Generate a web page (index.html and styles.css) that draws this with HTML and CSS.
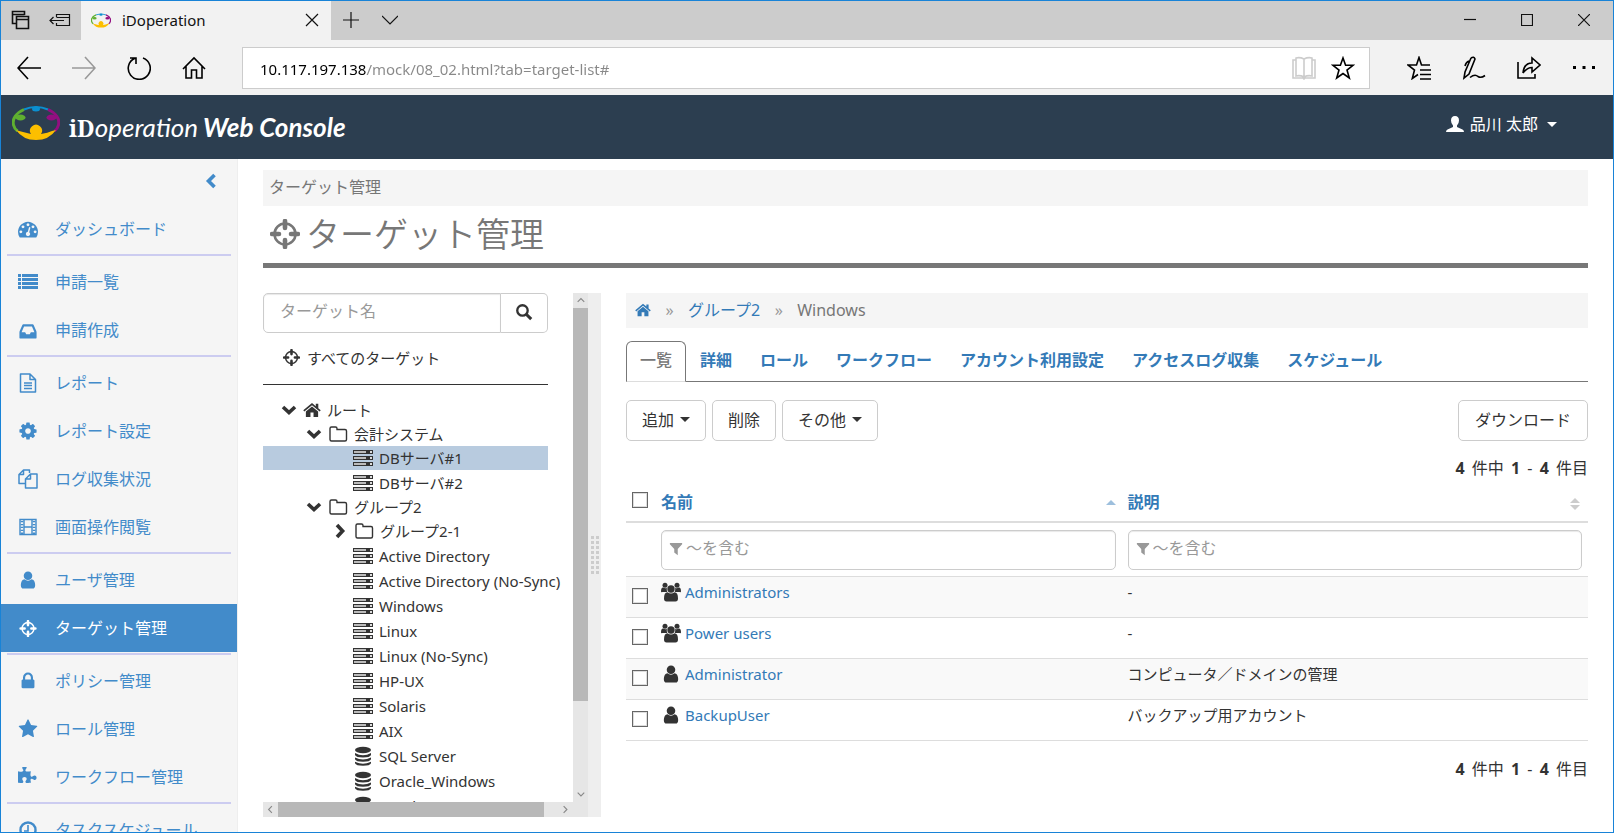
FILE: index.html
```html
<!DOCTYPE html>
<html lang="ja">
<head>
<meta charset="utf-8">
<title>iDoperation</title>
<link rel="stylesheet" href="styles.css">
</head>
<body>
<svg class="sprite" aria-hidden="true">
  <symbol id="logo" viewBox="0 0 48 34">
    <path d="M12 3.500Q24-1.500 36 3.500" fill="none" stroke="#0b8fd0" stroke-width="2"/>
    <ellipse cx="24" cy="3" rx="4" ry="2.500" fill="#0b8fd0"/>
    <path d="M12 3.500C4 7 0 13 1.500 19q1 4 4 6" fill="none" stroke="#5fb030" stroke-width="3"/>
    <ellipse cx="8.500" cy="11.500" rx="5" ry="3" fill="#5fb030"/>
    <path d="M36 3.500C44 7 48 13 46.500 19q-1 4-4 6" fill="none" stroke="#930f80" stroke-width="3"/>
    <ellipse cx="39.500" cy="11.500" rx="5" ry="3" fill="#930f80"/>
    <path d="M4 24q3 1 7 2 4 1 8 2a6 6 0 1 1 10 0q7-1 11-3l4-1q-7 10-20 10T4 24z" fill="#fcbf00"/>
  </symbol>
  <symbol id="dash" viewBox="0 0 1792 1792"><path d="M384 1152q0-53-37.500-90.500t-90.500-37.500-90.500 37.500-37.500 90.500 37.500 90.500 90.500 37.500 90.500-37.500 37.500-90.500zm192-448q0-53-37.500-90.500t-90.500-37.500-90.500 37.500-37.500 90.500 37.500 90.500 90.500 37.500 90.500-37.500 37.500-90.500zm428 481l101-382q6-26-7.500-48.500t-38.500-29.500-48 6.500-30 39.500l-101 382q-60 5-107 43.500t-63 98.500q-20 77 20 146t117 89 146-20 89-117q16-60-6-117t-72-91zm660-33q0-53-37.500-90.500t-90.500-37.500-90.500 37.500-37.500 90.500 37.500 90.500 90.500 37.500 90.500-37.500 37.500-90.500zm-640-640q0-53-37.500-90.500t-90.500-37.500-90.500 37.500-37.500 90.500 37.500 90.500 90.500 37.500 90.500-37.500 37.500-90.500zm448 192q0-53-37.500-90.500t-90.500-37.500-90.500 37.500-37.500 90.500 37.500 90.500 90.500 37.500 90.500-37.500 37.500-90.500zm320 448q0 261-141 483-19 29-54 29h-1402q-35 0-54-29-141-221-141-483 0-182 71-348t191-286 286-191 348-71 348 71 286 191 191 286 71 348z"/></symbol>
  <symbol id="list" viewBox="0 0 20 20"><path d="M0 2h3v3H0zM4 2h16v3H4zM0 6h3v3H0zM4 6h16v3H4zM0 10h3v3H0zM4 10h16v3H4zM0 14h3v3H0zM4 14h16v3H4z"/></symbol>
  <symbol id="inbox" viewBox="0 0 1536 1792"><path d="M1023 1088h316l-5-16-212-496h-708l-212 496-5 16h316l95 192h320zm513 30v482q0 26-19 45t-45 19H64q-26 0-45-19t-19-45v-482q0-62 25-123l238-552q10-25 36.500-42t52.500-17h832q26 0 52.500 17t36.500 42l238 552q25 61 25 123z"/></symbol>
  <symbol id="file" viewBox="0 0 20 20"><path d="M2.500 1H12l5.500 5.500V19h-15zM12 1v5.500h5.500M6 10h8M6 12.500h8M6 15.500h8" fill="none" stroke="currentColor" stroke-width="1.500" stroke-linejoin="round"/></symbol>
  <symbol id="cog" viewBox="0 0 1792 1792"><path d="M1152 896q0-106-75-181t-181-75-181 75-75 181 75 181 181 75 181-75 75-181zm512-109v222q0 12-8 23t-20 13l-185 28q-19 54-39 91 35 50 107 138 10 12 10 25t-9 23q-27 37-99 108t-94 71q-12 0-26-9l-138-108q-44 23-91 38-16 136-29 186-7 28-36 28h-222q-14 0-24.500-8.500t-11.500-21.500l-28-184q-49-16-90-37l-141 107q-10 9-25 9-14 0-25-11-126-114-165-168-7-10-7-23 0-12 8-23 15-21 51-66.500t54-70.500q-27-50-41-99l-183-27q-13-2-21-12.500t-8-23.500v-222q0-12 8-23t19-13l186-28q14-46 39-92-40-57-107-138-10-12-10-24 0-10 9-23 26-36 98.500-107.500t94.500-71.500q13 0 26 10l138 107q44-23 91-38 16-136 29-186 7-28 36-28h222q14 0 24.500 8.500t11.500 21.500l28 184q49 16 90 37l142-107q9-9 24-9 13 0 25 10 129 119 165 170 7 8 7 22 0 12-8 23-15 21-51 66.500t-54 70.500q26 50 41 98l183 28q13 2 21 12.500t8 23.500z"/></symbol>
  <symbol id="copy" viewBox="0 0 20 20"><path d="M11.500 4V1H5.500L1 5.500V14.500h6M5.500 1v4.500H1M12.500 5H19v14H7.500V10zM12.500 5v5h-5" fill="none" stroke="currentColor" stroke-width="1.500" stroke-linejoin="round"/></symbol>
  <symbol id="film" viewBox="0 0 20 20"><path d="M2 2.500h16v15H2zM6 2.500v15M14 2.500v15M6 10h8" fill="none" stroke="currentColor" stroke-width="1.400"/><path d="M4 4v13M16 4v13" fill="none" stroke="currentColor" stroke-width="2.600" stroke-dasharray="1.300 1.600"/></symbol>
  <symbol id="user" viewBox="0 0 1792 1792"><path d="M1536 1399q0 109-62.500 187t-150.500 78h-854q-88 0-150.500-78t-62.500-187q0-85 8.500-160.500t31.500-152 58.500-131 94-89 134.500-34.500q131 128 313 128t313-128q76 0 134.500 34.500t94 89 58.500 131 31.500 152 8.500 160.500zm-256-887q0 159-112.500 271.500t-271.500 112.500-271.500-112.500-112.500-271.500 112.500-271.500 271.500-112.500 271.500 112.500 112.500 271.500z"/></symbol>
  <symbol id="cross" viewBox="0 0 30 30"><circle cx="15" cy="15" r="10.500" fill="none" stroke="currentColor" stroke-width="2.600"/><path d="M15 2v7M15 21v7M2 15h7M21 15h7" fill="none" stroke="currentColor" stroke-width="4.600" stroke-linecap="round"/></symbol>
  <symbol id="lock" viewBox="0 0 1792 1792"><path d="M640 768h512v-192q0-106-75-181t-181-75-181 75-75 181v192zm832 96v576q0 40-28 68t-68 28h-960q-40 0-68-28t-28-68v-576q0-40 28-68t68-28h32v-192q0-184 132-316t316-132 316 132 132 316v192h32q40 0 68 28t28 68z"/></symbol>
  <symbol id="star" viewBox="0 0 1792 1792"><path d="M1728 647q0 22-26 48l-363 354 86 500q1 7 1 20 0 21-10.500 35.500t-30.500 14.500q-19 0-40-12l-449-236-449 236q-22 12-40 12-21 0-31.500-14.500t-10.500-35.500q0-6 2-20l86-500-364-354q-25-27-25-48 0-37 56-46l502-73 225-455q19-41 49-41t49 41l225 455 502 73q56 9 56 46z"/></symbol>
  <symbol id="puzzle" viewBox="0 0 1792 1792"><path d="M1664 970q0 81-44.500 135t-123.500 54q-41 0-77.500-17.500t-59-38-56.500-38-71-17.500q-110 0-110 124 0 39 16 115t15 115v5q-22 0-33 1-34 3-97.500 11.500t-115.500 13.500-98 5q-61 0-103-26.500t-42-83.500q0-37 17.500-71t38-56.500 38-59 17.500-77.500q0-79-54-123.500t-135-44.500q-84 0-143 45.500t-59 127.500q0 43 15 83t33.500 64.500 33.500 53 15 50.500q0 45-46 89-37 35-117 35-95 0-245-24-9-2-27.500-4t-27.500-4l-13-2q-1 0-3-1-2 0-2-1v-1024q2 1 17.500 3.500t34 5 21.500 3.500q150 24 245 24 80 0 117-35 46-44 46-89 0-22-15-50.500t-33.500-53-33.500-64.500-15-83q0-82 59-127.500t144-45.500q80 0 134 44.500t54 123.500q0 41-17.500 77.500t-38 59-38 56.500-17.500 71q0 57 42 83.500t103 26.500q64 0 180-15t163-17v2q-1 2-3.500 17.500t-5 34-3.500 21.500q-24 150-24 245 0 80 35 117 44 46 89 46 22 0 50.500-15t53-33.500 64.500-33.500 83-15q82 0 127.500 59t45.500 143z"/></symbol>
  <symbol id="clock" viewBox="0 0 20 20"><path d="M10 5v6H6" fill="none" stroke="currentColor" stroke-width="1.600"/><circle cx="10" cy="10" r="7.500" fill="none" stroke="currentColor" stroke-width="2.400"/></symbol>
  <symbol id="home" viewBox="0 0 20 20"><path d="M10 2.300L.3 10.400l1.200 1.400L10 4.700l8.500 7.100 1.200-1.400L17 8V3h-2.800v2.700z"/><path d="M10 6l-6.800 5.700v6.100h5.100v-5h3.400v5h5.100v-6.100z"/></symbol>
  <symbol id="chev-left" viewBox="0 0 16 16"><path d="M11.500 2L5.500 8l6 6" fill="none" stroke="currentColor" stroke-width="3.600"/></symbol>
  <symbol id="chev-down" viewBox="0 0 16 16"><path d="M2 5l6 5.600L14 5" fill="none" stroke="currentColor" stroke-width="3.600"/></symbol>
  <symbol id="chev-right" viewBox="0 0 16 16"><path d="M5 2l5.600 6L5 14" fill="none" stroke="currentColor" stroke-width="3.600"/></symbol>
  <symbol id="thin-up" viewBox="0 0 16 16"><path d="M5 9.500l3.500-3.500L12 9.500" fill="none" stroke="currentColor" stroke-width="1.200"/></symbol>
  <symbol id="thin-down" viewBox="0 0 16 16"><path d="M5 6l3.500 3.500L12 6" fill="none" stroke="currentColor" stroke-width="1.200"/></symbol>
  <symbol id="thin-left" viewBox="0 0 16 16"><path d="M9.500 4.500L6 8l3.500 3.500" fill="none" stroke="currentColor" stroke-width="1.200"/></symbol>
  <symbol id="thin-right" viewBox="0 0 16 16"><path d="M6 4.500L9.500 8 6 11.500" fill="none" stroke="currentColor" stroke-width="1.200"/></symbol>
  <symbol id="folder" viewBox="0 0 20 20"><path d="M2 4.500Q2 3 3.500 3h4Q9 3 9 4.500V5.500h8q1.500 0 1.500 1.500v8.500q0 1.500-1.500 1.500H3.500Q2 17 2 15.500z" fill="none" stroke="currentColor" stroke-width="1.400"/></symbol>
  <symbol id="server" viewBox="0 0 20 20"><path d="M0 2h20v4H0zM0 8h20v4H0zM0 14h20v4H0z"/><path d="M1 3h12v2H1zM1 9h12v2H1zM1 15h12v2H1z" fill="#bbb"/><path d="M17 3h2v2h-2zM17 9h2v2h-2zM17 15h2v2h-2z" fill="#ddd"/></symbol>
  <symbol id="db" viewBox="0 0 20 20"><ellipse cx="10" cy="4" rx="8" ry="3.300"/><path d="M2 7q8 4.500 16 0v2q-1 2.500-8 2.500T2 9zM2 11.500q8 4 16 0v1.700q-1 2.500-8 2.500t-8-2.500zM2 15.700q8 4 16 0v1.500q-1 2.500-8 2.500t-8-2.500z"/></symbol>
  <symbol id="users" viewBox="0 0 20 20"><circle cx="4" cy="3.300" r="2.500"/><circle cx="16" cy="3.300" r="2.500"/><path d="M0 9.500q0-4 2-4 2 1.300 4 .5-.8 2.500.3 4H1.500Q0 10.500 0 9.500zM20 9.500q0-4-2-4-2 1.300-4 .5.800 2.500-.3 4h4.800q1.500.5 1.500-.5z"/><circle cx="10" cy="7" r="3.700"/><path d="M3 16.500q0-6.200 3.500-6.200 3.500 2.400 7 0 3.500 0 3.500 6.200 0 3-2.500 3h-9Q3 19.500 3 16.500z"/></symbol>
  <symbol id="search" viewBox="0 0 20 20"><circle cx="8.300" cy="8.300" r="5.800" fill="none" stroke="currentColor" stroke-width="2.600"/><path d="M12.500 12.500l5.500 5.500" stroke="currentColor" stroke-width="3.400"/></symbol>
  <symbol id="filter" viewBox="0 0 16 16"><path d="M1 1h14v1.500L10 8v7l-4-3V8L1 2.500z"/></symbol>
  <symbol id="head" viewBox="0 0 18 16"><path d="M9 0q4 0 4 4.500 0 3-2 5v1.500l5.500 2.500Q18 14 18 16H0q0-2 1.500-2.500L7 11V9.500q-2-2-2-5Q5 0 9 0z"/></symbol>
</svg>

<div class="window">
  <div class="titlebar">
    <button class="tb" aria-label="タブの一覧"><svg width="20" height="20" viewBox="0 0 20 20"><path d="M5 13.500H1.500v-12h12V5M1.500 4.500h12M5.500 6.500h12v12h-12zM5.500 9.500h12" class="ln2"/></svg></button>
    <button class="tb" aria-label="タブを保存"><svg width="22" height="20" viewBox="0 0 22 20"><path d="M7.500 7V4.500h13v11h-13V13M7.500 7.500h13M1 10.500h14M4.500 7L1 10.500 4.500 14" class="ln"/></svg></button>
    <div class="tab">
      <svg width="20" height="15"><use href="#logo"/></svg>
      <span class="tab-title">iDoperation</span>
      <button class="bare" aria-label="タブを閉じる"><svg width="14" height="14" viewBox="0 0 14 14"><path d="M1 1l12 12M13 1L1 13" class="ln"/></svg></button>
    </div>
    <button class="tb" aria-label="新しいタブ"><svg width="16" height="16" viewBox="0 0 16 16"><path d="M8 0v16M0 8h16" class="ln"/></svg></button>
    <button class="tb" aria-label="タブのプレビュー"><svg width="16" height="16" viewBox="0 0 16 16"><path d="M0 4l8 8 8-8" class="ln"/></svg></button>
    <div class="wc">
      <button class="bare" aria-label="最小化"><svg width="12" height="12" viewBox="0 0 12 12"><path d="M0 5.500h12" class="ln"/></svg></button>
      <button class="bare" aria-label="最大化"><svg width="12" height="12" viewBox="0 0 12 12"><path d="M.5.500h11v11H.5z" class="ln"/></svg></button>
      <button class="bare" aria-label="閉じる"><svg width="12" height="12" viewBox="0 0 12 12"><path d="M0 0l12 12M12 0L0 12" class="ln"/></svg></button>
    </div>
  </div>

  <div class="toolbar">
    <button class="tool" aria-label="戻る"><svg width="24" height="24" viewBox="0 0 24 24"><path d="M11 1L1 12l10 11M1 12h23" class="ln2"/></svg></button>
    <button class="tool dim" aria-label="進む"><svg width="24" height="24" viewBox="0 0 24 24"><path d="M13 1l10 11-10 11M23 12H0" class="ln2"/></svg></button>
    <button class="tool" aria-label="更新"><svg width="24" height="24" viewBox="0 0 24 24"><path d="M8 2.200A11 11 0 1 0 16 2M3 2h6v6" class="ln2"/></svg></button>
    <button class="tool" aria-label="ホーム"><svg width="24" height="24" viewBox="0 0 24 24"><path d="M1 13L12 2l11 11M4 10.500V22h5.500v-8h5v8H20V10.500" class="ln2"/></svg></button>
    <div class="address">
      <input type="text" class="url" aria-label="アドレス" value="10.117.197.138/mock/08_02.html?tab=target-list#">
      <button class="bare pale" aria-label="読み取りビュー"><svg width="24" height="24" viewBox="0 0 24 24"><path d="M12 3q-4-2-8-1v18q4-1 8 1 4-2 8-1V2q-4-1-8 1v18M4 4H1v18h10l1 1 1-1h10V4h-3" class="ln2"/></svg></button>
      <button class="bare" aria-label="お気に入りに追加"><svg width="24" height="24" viewBox="0 0 24 24"><path d="M12 2l2.600 7.300H22l-6 4.700 2.300 8L12 17.500 5.700 22 8 14 2 9.300h7.400z" class="ln2"/></svg></button>
    </div>
    <button class="tool" aria-label="ハブ"><svg width="24" height="24" viewBox="0 0 24 24"><path d="M23 9h-8.500L12 1.500 9.500 9H1l6.500 5-2.200 8.500L11 18.500M13 14h11M13 18.500h11M13 23h11" class="ln2"/></svg></button>
    <button class="tool" aria-label="メモ"><svg width="24" height="24" viewBox="0 0 24 24"><path d="M9 2q3-2 4 1L7 18l-5 4 1-6L9 2M7 5q-3 1-4 5M8 21.500q5-4 8-1 3 2 7-1" class="ln2"/></svg></button>
    <button class="tool" aria-label="共有"><svg width="24" height="24" viewBox="0 0 24 24"><path d="M1 6v16h17v-4M6 17q1-10 9-10V2l8 7-8 7v-4.500q-5 0-9 5.500" class="ln2"/></svg></button>
    <button class="tool" aria-label="その他の操作"><svg width="24" height="24" viewBox="0 0 24 24"><path d="M1 10h3v3H1zM10.500 10h3v3h-3zM20 10h3v3h-3z"/></svg></button>
  </div>

  <header class="appbar">
    <svg class="mark" width="48" height="34"><use href="#logo"/></svg>
    <div class="brand"><span class="brand-id">iD</span><span class="brand-op">operation</span><span class="brand-wc">Web Console</span></div>
    <button class="usermenu"><svg width="18" height="16"><use href="#head"/></svg><span>品川 太郎</span><i class="caret"></i></button>
  </header>

  <div class="body">
    <nav class="side">
      <button class="collapse" aria-label="メニューを閉じる"><svg width="16" height="16"><use href="#chev-left"/></svg></button>
      <a class="nav" href="#"><svg width="20" height="20"><use href="#dash"/></svg>ダッシュボード</a>
      <hr class="sep">
      <a class="nav" href="#"><svg width="20" height="20"><use href="#list"/></svg>申請一覧</a>
      <a class="nav" href="#"><svg width="20" height="20"><use href="#inbox"/></svg>申請作成</a>
      <hr class="sep">
      <a class="nav" href="#"><svg width="20" height="20"><use href="#file"/></svg>レポート</a>
      <a class="nav" href="#"><svg width="20" height="20"><use href="#cog"/></svg>レポート設定</a>
      <a class="nav" href="#"><svg width="20" height="20"><use href="#copy"/></svg>ログ収集状況</a>
      <a class="nav" href="#"><svg width="20" height="20"><use href="#film"/></svg>画面操作閲覧</a>
      <hr class="sep">
      <a class="nav" href="#"><svg width="20" height="20"><use href="#user"/></svg>ユーザ管理</a>
      <a class="nav nav-on" href="#"><svg width="20" height="17"><use href="#cross"/></svg>ターゲット管理</a>
      <hr class="sep">
      <a class="nav" href="#"><svg width="20" height="20"><use href="#lock"/></svg>ポリシー管理</a>
      <a class="nav" href="#"><svg width="20" height="20"><use href="#star"/></svg>ロール管理</a>
      <a class="nav" href="#"><svg width="20" height="20"><use href="#puzzle"/></svg>ワークフロー管理</a>
      <hr class="sep">
      <a class="nav" href="#"><svg width="20" height="20"><use href="#clock"/></svg>タスクスケジュール</a>
    </nav>

    <main class="main">
      <div class="crumb">ターゲット管理</div>
      <h1 class="title"><svg width="30" height="30"><use href="#cross"/></svg>ターゲット管理</h1>
      <div class="panes">
        <section class="left">
          <div class="viewport">
            <form class="search">
              <input type="text" class="field search-field" placeholder="ターゲット名" aria-label="ターゲット名">
              <button type="button" class="search-btn" aria-label="検索"><svg width="18" height="18"><use href="#search"/></svg></button>
            </form>
            <a class="all" href="#"><svg width="17" height="17"><use href="#cross"/></svg>すべてのターゲット</a>
            <ul class="tree">
              <li><a class="node d0" href="#"><svg width="16" height="16"><use href="#chev-down"/></svg><svg width="18" height="18"><use href="#home"/></svg>ルート</a>
                <ul>
                  <li><a class="node d1" href="#"><svg width="16" height="16"><use href="#chev-down"/></svg><svg width="20" height="20"><use href="#folder"/></svg>会計システム</a>
                    <ul class="leaves">
                      <li><a class="node leaf node-on" href="#"><svg width="20" height="20"><use href="#server"/></svg>DBサーバ#1</a></li>
                      <li><a class="node leaf" href="#"><svg width="20" height="20"><use href="#server"/></svg>DBサーバ#2</a></li>
                    </ul>
                  </li>
                  <li><a class="node d1" href="#"><svg width="16" height="16"><use href="#chev-down"/></svg><svg width="20" height="20"><use href="#folder"/></svg>グループ2</a>
                    <ul class="leaves">
                      <li><a class="node d2" href="#"><svg width="16" height="16"><use href="#chev-right"/></svg><svg width="20" height="20"><use href="#folder"/></svg>グループ2-1</a></li>
                      <li><a class="node leaf" href="#"><svg width="20" height="20"><use href="#server"/></svg>Active Directory</a></li>
                      <li><a class="node leaf" href="#"><svg width="20" height="20"><use href="#server"/></svg>Active Directory (No-Sync)</a></li>
                      <li><a class="node leaf" href="#"><svg width="20" height="20"><use href="#server"/></svg>Windows</a></li>
                      <li><a class="node leaf" href="#"><svg width="20" height="20"><use href="#server"/></svg>Linux</a></li>
                      <li><a class="node leaf" href="#"><svg width="20" height="20"><use href="#server"/></svg>Linux (No-Sync)</a></li>
                      <li><a class="node leaf" href="#"><svg width="20" height="20"><use href="#server"/></svg>HP-UX</a></li>
                      <li><a class="node leaf" href="#"><svg width="20" height="20"><use href="#server"/></svg>Solaris</a></li>
                      <li><a class="node leaf" href="#"><svg width="20" height="20"><use href="#server"/></svg>AIX</a></li>
                      <li><a class="node leaf" href="#"><svg width="20" height="20"><use href="#db"/></svg>SQL Server</a></li>
                      <li><a class="node leaf" href="#"><svg width="20" height="20"><use href="#db"/></svg>Oracle_Windows</a></li>
                      <li><a class="node leaf" href="#"><svg width="20" height="20"><use href="#db"/></svg>Oracle_UNIX</a></li>
                    </ul>
                  </li>
                </ul>
              </li>
            </ul>
          </div>
          <div class="vbar"><svg width="15" height="15"><use href="#thin-up"/></svg><div class="vtrack"><div class="vthumb"></div></div><svg width="15" height="15"><use href="#thin-down"/></svg></div>
          <div class="hbar"><svg width="15" height="15"><use href="#thin-left"/></svg><div class="htrack"><div class="hthumb"></div></div><svg width="15" height="15"><use href="#thin-right"/></svg></div>
          <div class="corner"></div>
        </section>
        <div class="splitter"><div class="grip"></div></div>

        <section class="right">
          <div class="path"><a href="#" aria-label="ホーム"><svg width="16" height="16"><use href="#home"/></svg></a><span class="raquo">»</span><a href="#">グループ2</a><span class="raquo">»</span><span>Windows</span></div>
          <div class="tabs">
            <a class="tb2 tb2-on" href="#">一覧</a><a class="tb2" href="#">詳細</a><a class="tb2" href="#">ロール</a><a class="tb2" href="#">ワークフロー</a><a class="tb2" href="#">アカウント利用設定</a><a class="tb2" href="#">アクセスログ収集</a><a class="tb2" href="#">スケジュール</a>
          </div>
          <div class="actions">
            <button class="btn">追加<i class="caret"></i></button>
            <button class="btn">削除</button>
            <button class="btn">その他<i class="caret"></i></button>
            <button class="btn btn-end">ダウンロード</button>
          </div>
          <div class="count"><b>4</b> 件中 <b>1</b> - <b>4</b> 件目</div>
          <table class="grid">
            <thead>
              <tr>
                <th class="c-check"><input type="checkbox" class="check" aria-label="すべて選択"></th>
                <th><div class="th"><a href="#">名前</a><i class="sort-asc"></i></div></th>
                <th><div class="th"><a href="#">説明</a><span class="sort-both"><i></i><i></i></span></div></th>
              </tr>
            </thead>
            <tbody>
              <tr class="filters">
                <td></td>
                <td><div class="filter"><svg width="14" height="14"><use href="#filter"/></svg><input type="text" class="field filter-field" placeholder="～を含む" aria-label="名前で絞り込み"></div></td>
                <td><div class="filter"><svg width="14" height="14"><use href="#filter"/></svg><input type="text" class="field filter-field" placeholder="～を含む" aria-label="説明で絞り込み"></div></td>
              </tr>
              <tr class="row odd"><td><input type="checkbox" class="check" aria-label="Administrators"></td><td><div class="who"><svg width="20" height="20"><use href="#users"/></svg><a href="#">Administrators</a></div></td><td>-</td></tr>
              <tr class="row"><td><input type="checkbox" class="check" aria-label="Power users"></td><td><div class="who"><svg width="20" height="20"><use href="#users"/></svg><a href="#">Power users</a></div></td><td>-</td></tr>
              <tr class="row odd"><td><input type="checkbox" class="check" aria-label="Administrator"></td><td><div class="who"><svg width="20" height="20"><use href="#user"/></svg><a href="#">Administrator</a></div></td><td>コンピュータ／ドメインの管理</td></tr>
              <tr class="row"><td><input type="checkbox" class="check" aria-label="BackupUser"></td><td><div class="who"><svg width="20" height="20"><use href="#user"/></svg><a href="#">BackupUser</a></div></td><td>バックアップ用アカウント</td></tr>
            </tbody>
          </table>
          <div class="count count-end"><b>4</b> 件中 <b>1</b> - <b>4</b> 件目</div>
        </section>
      </div>
    </main>
  </div>
</div>
</body>
</html>
```
FILE: styles.css
```css
* { box-sizing: border-box; }
body { margin: 0; font: 400 16px/24px "Noto Sans", "Noto Sans CJK JP", sans-serif; color: #333; background: #fff; }
a { color: #337ab7; text-decoration: none; }
button, input { font: inherit; color: inherit; }
button { padding: 0; border: 0; background: none; }
svg { flex: none; fill: currentColor; display: block; }
.sprite { display: none; }
ul { list-style: none; margin: 0; padding: 0; }
.ln { fill: none; stroke: currentColor; stroke-width: 1.2; }
.ln2 { fill: none; stroke: currentColor; stroke-width: 1.6; }
.window { height: 100vh; display: flex; flex-direction: column; overflow: hidden; border: 1px solid #1883d7; }
.bare { display: flex; align-items: center; justify-content: center; }

/* browser chrome */
.titlebar { flex: none; display: flex; height: 39px; padding-bottom: 1px; background: #ccc; color: #111; }
.tb { width: 39px; display: flex; align-items: center; justify-content: center; }
.tab { flex: 0 0 250px; display: flex; align-items: center; height: 39px; background: #f2f2f2; margin-left: 2px; padding: 0 12px 1px 10px; }
.tab-title { flex: 1; padding-left: 11px; font-size: 15px; }
.wc { margin-left: auto; display: flex; padding-right: 1px; }
.wc .bare { width: 57px; }
.toolbar { flex: none; display: flex; align-items: center; height: 55px; padding-right: 2px; background: #f2f2f2; color: #000; }
.tool { width: 55px; height: 55px; display: flex; align-items: center; justify-content: center; }
.dim { color: #999; }
.address { flex: 1; display: flex; align-items: center; height: 42px; margin: 0 21px; padding: 0 14px 0 17px; gap: 15px; background: #fff; border: 1px solid #ccc; }
.url { flex: 1; height: 30px; border: 0; padding: 2px 0 0; font-size: 15px; color: transparent; background: linear-gradient(90deg, #000 107px, #888 107px); -webkit-background-clip: text; background-clip: text; }
.pale { color: #ccc; }

/* application bar */
.appbar { flex: none; display: flex; align-items: center; height: 64px; padding: 0 56px 0 11px; background: #2c3e50; color: #fff; }
.mark { margin-bottom: 8px; }
.brand { display: flex; align-items: baseline; padding-left: 9px; font-family: Lato, sans-serif; font-size: 26px; line-height: 32px; }
.brand-id { font-family: "Noto Serif", "DejaVu Serif", serif; font-weight: 700; font-size: 23px; }
.brand-op { font-style: italic; font-weight: 400; }
.brand-wc { font-style: italic; font-weight: 700; padding-left: 5px; }
.usermenu { margin-left: auto; display: flex; align-items: center; gap: 6px; padding-bottom: 6px; }
.caret { border: 5px solid transparent; border-top-color: currentColor; border-bottom: 0; }
.usermenu .caret { margin-left: 3px; }

.body { flex: 1; min-height: 0; display: flex; }

/* side navigation */
.side { flex: 0 0 237px; overflow: hidden; background: #f5f5f5; border-right: 1px solid #eee; }
.collapse { display: block; margin: 14px 18px 16px auto; color: #428bca; }
.nav { display: flex; align-items: center; gap: 17px; height: 48px; padding-left: 17px; color: #428bca; }
.nav-on { background: #428bca; color: #fff; }
.sep { height: 2px; margin: 1px 6px 2px; border: 0; background: #ccccf0; }

/* main area */
.main { flex: 1; min-width: 0; display: flex; flex-direction: column; padding: 11px 25px 15px; }
.crumb { flex: none; height: 36px; padding: 5px 6px; background: #f5f5f5; color: #777; }
.title { flex: none; display: flex; align-items: center; gap: 6px; height: 62px; margin: 0 0 25px; padding: 0 7px 2px; border-bottom: 5px solid #777; color: #777; font-size: 34px; line-height: 44px; font-weight: 350; }
.panes { flex: 1; min-height: 0; display: flex; }

.left { flex: 0 0 325px; display: grid; grid-template: minmax(0, 1fr) 15px / minmax(0, 1fr) 15px; }
.viewport { overflow: hidden; }
.search { display: flex; width: 285px; height: 40px; }
.field { border: 1px solid #ccc; border-radius: 5px; background: #fff; box-shadow: inset 0 1px 1px #e8e8e8; }
.field::placeholder { color: #999; opacity: 1; }
.search-field { flex: 1; min-width: 0; padding: 0 16px 4px; border-radius: 5px 0 0 5px; }
.search-btn { width: 47px; padding-bottom: 2px; border: 1px solid #ccc; border-left: 0; border-radius: 0 5px 5px 0; display: flex; align-items: center; justify-content: center; }
.all { display: flex; align-items: center; gap: 7px; width: 285px; height: 52px; margin-bottom: 13px; padding: 0 0 2px 20px; border-bottom: 1px solid #333; color: #333; font-size: 15px; }
.tree { font-size: 15px; }
.leaves li + li { margin-top: 1px; }
.node { display: flex; align-items: center; gap: 6px; width: 285px; height: 24px; line-height: 24px; color: #333; white-space: nowrap; }
.d0 { padding-left: 18px; }
.d1 { padding-left: 43px; }
.d2 { padding-left: 69px; }
.leaf { padding-left: 90px; }
.node-on { background: #b8cbdf; }
.vbar, .hbar, .corner { background: #e6e6e6; color: #888; }
.vbar { display: flex; flex-direction: column; }
.hbar { display: flex; }
.vtrack, .htrack { flex: 1; }
.vthumb { height: 82%; background: #b8b8b8; }
.hthumb { width: 95%; height: 15px; background: #b8b8b8; }
.splitter { flex: 0 0 13px; display: flex; align-items: center; justify-content: center; background: #eee; }
.grip { width: 8px; height: 38px; background: repeating-linear-gradient(180deg, transparent 0 3px, #eee 3px 5px), linear-gradient(90deg, #ccc 0 3px, #eee 3px 5px, #ccc 5px 8px); }

.right { flex: 1; min-width: 0; padding-left: 25px; }
.path { display: flex; align-items: center; height: 35px; padding: 0 9px 2px; background: #f5f5f5; color: #777; }
.raquo { width: 37px; text-align: center; color: #999; }
.tabs { display: flex; height: 41px; margin: 13px 0 18px; border-bottom: 1px solid #777; }
.tb2 { height: 41px; padding: 7px 14px; font-weight: 700; }
.tb2-on { padding: 6px 13px; border: 1px solid #777; border-bottom-color: #ddd; border-radius: 6px 6px 0 0; background: #fff; color: #777; font-weight: 500; }
.actions { display: flex; gap: 6px; }
.btn { display: flex; align-items: center; gap: 6px; height: 41px; padding: 0 15px 2px; border: 1px solid #ccc; border-radius: 5px; background: #fff; }
.btn-end { margin-left: auto; padding: 0 16px 2px; }
.count { margin: 15px 0 4px; text-align: right; }
.count b { font-weight: 700; margin-right: 3px; }
.count b + b { margin-left: 3px; }
.count-end { margin-top: 16px; }

.grid { width: 100%; border-collapse: collapse; table-layout: fixed; }
.grid th, .grid td { padding: 6px; text-align: left; vertical-align: top; }
.grid thead th { height: 38px; border-bottom: 2px solid #ddd; }
.c-check { width: 29px; }
.th { display: flex; align-items: center; }
.th a { flex: 1; font-weight: 700; }
.sort-asc { border: 5px solid transparent; border-bottom-color: #9dbfdd; border-top: 0; }
.sort-both { display: grid; gap: 2px; padding: 4px 2px 0 0; }
.sort-both i { border: 5px solid transparent; }
.sort-both i:first-child { border-top: 0; border-bottom-color: #ccc; }
.sort-both i:last-child { border-bottom: 0; border-top-color: #ccc; }
.check { appearance: none; display: block; width: 16px; height: 16px; margin: 4px 0 0; border: 1px solid #666; box-shadow: inset 0 0 0 1px #ddd; background: #fff; }
thead .check { margin-top: 2px; }
.filters td { height: 54px; padding-top: 7px; }
.filter { position: relative; color: #999; }
.filter svg { position: absolute; left: 8px; top: 12px; }
.filter-field { width: 100%; height: 40px; padding: 0 8px 4px 24px; }
.row td { height: 41px; border-top: 1px solid #ddd; padding-top: 3px; font-size: 15px; }
.row td:first-child { padding-top: 7px; }
.row:last-child td { border-bottom: 1px solid #ddd; }
.odd { background: #f9f9f9; }
.who { display: flex; align-items: center; gap: 4px; }
```
